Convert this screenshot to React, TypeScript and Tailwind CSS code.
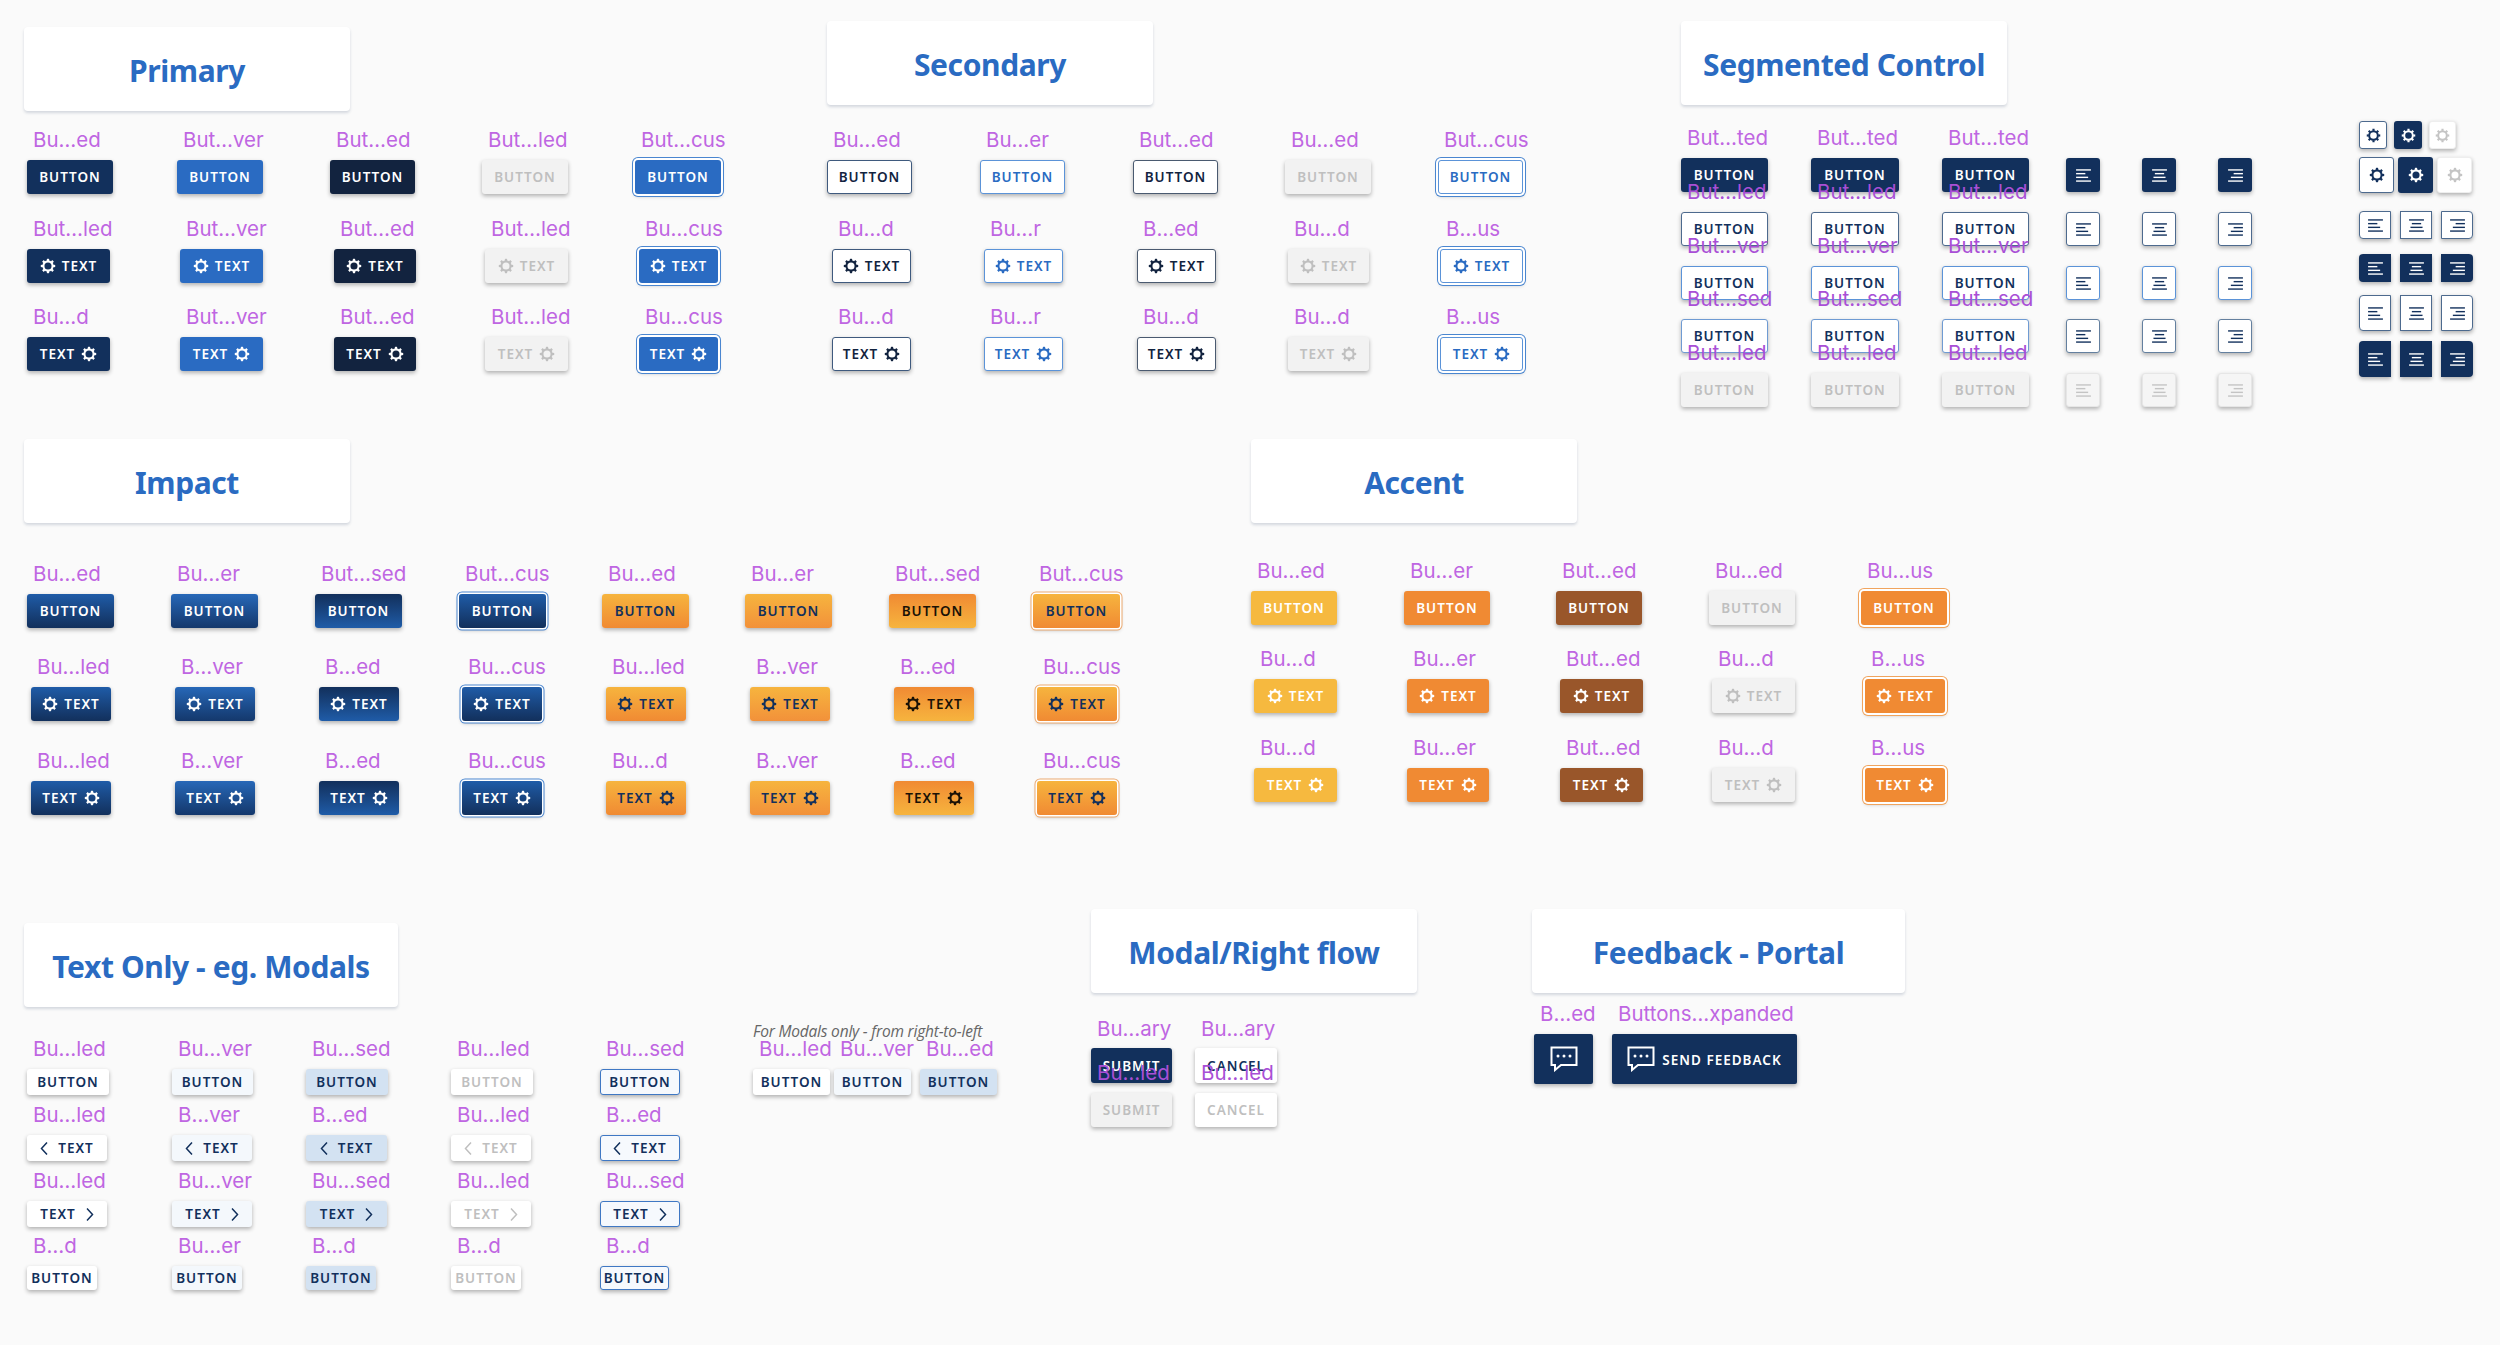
const drop = 'shadow-[0_2px_4px_rgba(0,0,0,0.3)]'

const tones: Record<string, string> = {
  navy: `bg-[#12305c] text-white ${drop}`,
  blue: `bg-[#2a6bc2] text-white ${drop}`,
  dark: `bg-[#12233f] text-white ${drop}`,
  off: `bg-[#f2f2f2] text-[#bfbfbf] ${drop}`,
  blueFocus: 'bg-[#2a6bc2] text-white shadow-[0_0_0_2px_#fff,0_0_0_3px_#4a86d0,0_2px_4px_rgba(0,0,0,0.3)]',
  sec: `bg-white text-[#12233f] border border-[#3f5a7e] ${drop}`,
  secHover: `bg-white text-[#2a6bc2] border border-[#5b93d8] ${drop}`,
  secPress: `bg-white text-[#12233f] border border-[#4a5a70] ${drop}`,
  secFocus: 'bg-white text-[#2a6bc2] border border-[#5b93d8] shadow-[0_0_0_2px_#fff,0_0_0_3px_#4a86d0,0_2px_4px_rgba(0,0,0,0.3)]',
  imp: `bg-gradient-to-b from-[#1f5ca8] to-[#12305c] text-white ${drop}`,
  impHover: `bg-gradient-to-b from-[#2768b8] to-[#14386c] text-white ${drop}`,
  impPress: `bg-gradient-to-b from-[#12305c] to-[#1f5ca8] text-white ${drop}`,
  impFocus: 'bg-gradient-to-b from-[#1f5ca8] to-[#12305c] text-white shadow-[0_0_0_1.5px_#fff,0_0_0_2.5px_#4a86d0,0_2px_4px_rgba(0,0,0,0.3)]',
  org: `bg-gradient-to-b from-[#f6b43e] to-[#f08a33] text-[#12305c] ${drop}`,
  orgHover: `bg-gradient-to-b from-[#f6b43e] to-[#f2913a] text-[#12305c] ${drop}`,
  orgPress: `bg-gradient-to-b from-[#f08a33] to-[#f6b43e] text-[#1a1206] ${drop}`,
  orgFocus: 'bg-gradient-to-b from-[#f6b43e] to-[#f08a33] text-[#12305c] shadow-[0_0_0_1.5px_#fff,0_0_0_2.5px_#ecaa70,0_2px_4px_rgba(0,0,0,0.3)]',
  yellow: `bg-[#f6b93f] text-white ${drop}`,
  orange: `bg-[#f08a33] text-white ${drop}`,
  brown: `bg-[#99562a] text-white ${drop}`,
  orangeFocus: 'bg-[#f08a33] text-white shadow-[0_0_0_2px_#fff,0_0_0_3px_#f0a45e,0_2px_4px_rgba(0,0,0,0.3)]',
  txt: `bg-white text-[#12305c] ${drop}`,
  txtHover: `bg-[#f4f8fc] text-[#12305c] ${drop}`,
  txtPress: `bg-[#d3e2f2] text-[#12305c] ${drop}`,
  txtOff: `bg-white text-[#bfbfbf] ${drop}`,
  txtFocus: `bg-[#f6f9fd] text-[#12305c] border border-[#3f78c4] ${drop}`,
  segSec: `bg-white text-[#12305c] border border-[#4d6a8e] ${drop}`,
  segHover: `bg-white text-[#12305c] border border-[#5b93d8] ${drop}`,
  segFocus: `bg-white text-[#12305c] border border-[#6f9bd3] ${drop}`,
  segPress: `bg-white text-[#12305c] border border-[#64809f] ${drop}`,
  segOff: `bg-[#f2f2f2] text-[#bfbfbf] ${drop}`,
  iconOff: `bg-[#f5f5f5] text-[#c4c4c4] border border-[#e6e6e6] ${drop}`,
  gearOff: `bg-white text-[#c4c4c4] border border-[#eeeeee] ${drop}`,
}

function Gear({ className = 'w-[16px] h-[16px]' }: { className?: string }) {
  const teeth = [0, 45, 90, 135, 180, 225, 270, 315]
  return (
    <svg viewBox="0 0 16 16" className={`${className} shrink-0`} fill="none" stroke="currentColor">
      <circle cx="8" cy="8" r="4.6" strokeWidth="2.1" />
      {teeth.map(t => (
        <line key={t} x1="8" y1="0.8" x2="8" y2="3" strokeWidth="2.3" transform={`rotate(${t} 8 8)`} />
      ))}
    </svg>
  )
}

function Chevron({ dir }: { dir: 'left' | 'right' }) {
  return (
    <svg viewBox="0 0 8 14" className="w-[8px] h-[15px] shrink-0" fill="none" stroke="currentColor" strokeWidth="1.5">
      <path d={dir === 'left' ? 'M7 1 L1.5 7 L7 13' : 'M1 1 L6.5 7 L1 13'} />
    </svg>
  )
}

function AlignIcon({ dir }: { dir: 'l' | 'c' | 'r' }) {
  const rows = [16, 10, 13, 16]
  return (
    <svg viewBox="0 0 16 14" className="w-[15px] h-[13px]" stroke="currentColor" strokeWidth="1.5">
      {rows.map((w, i) => {
        const x = dir === 'l' ? 0 : dir === 'c' ? (16 - w) / 2 : 16 - w
        return <line key={i} x1={x} x2={x + w} y1={1 + i * 4} y2={1 + i * 4} />
      })}
    </svg>
  )
}

function Feedback({ className }: { className: string }) {
  return (
    <svg viewBox="0 0 28 26" className={className} fill="none" stroke="currentColor" strokeWidth="2">
      <path d="M1.5 1.5 H26.5 V19 H11 L5 24 V19 H1.5 Z" />
      <circle cx="8" cy="10" r="1.5" fill="currentColor" stroke="none" />
      <circle cx="14" cy="10" r="1.5" fill="currentColor" stroke="none" />
      <circle cx="20" cy="10" r="1.5" fill="currentColor" stroke="none" />
    </svg>
  )
}

function Content({ kind }: { kind: string }) {
  if (kind === 'gl') return <><Gear /><span className="mt-[2px]">TEXT</span></>
  if (kind === 'gr') return <><span className="mt-[2px]">TEXT</span><Gear /></>
  if (kind === 'cl') return <><Chevron dir="left" /><span className="ml-[4px] mt-[2px]">TEXT</span></>
  if (kind === 'cr') return <><span className="mr-[4px] mt-[2px]">TEXT</span><Chevron dir="right" /></>
  if (kind === 'al') return <AlignIcon dir="l" />
  if (kind === 'ac') return <AlignIcon dir="c" />
  if (kind === 'ar') return <AlignIcon dir="r" />
  return <span className="mt-[2px]">{kind}</span>
}

function Btn({ tone, size, kind, round = 'rounded-[3px]' }: { tone: string; size: string; kind: string; round?: string }) {
  return (
    <div className={`${tones[tone]} ${size} ${round} flex items-center justify-center gap-[6px] text-[13.5px] leading-none font-semibold tracking-[1px]`}>
      <Content kind={kind} />
    </div>
  )
}

function Label({ children, over = false }: { children: string; over?: boolean }) {
  return (
    <div className={`relative h-[26px] pl-[6px] font-['Inter',sans-serif] text-[20.5px] leading-[26px] font-normal whitespace-nowrap ${over ? 'text-[#a94fd6]' : 'text-[#bf66e2]'}`}>
      {children}
    </div>
  )
}

interface RowProps {
  cols: string
  labels: string[]
  tones: string[]
  widths: string[]
  kind: string | string[]
  h?: string
  over?: boolean
  className?: string
}

function BtnRow({ cols, labels, tones: rowTones, widths, kind, h = 'h-[34px]', over = false, className = '' }: RowProps) {
  return (
    <div className={`grid ${cols} items-end ${className}`}>
      {rowTones.map((tone, i) => (
        <div key={i}>
          {labels[i] && <div className="mb-[7px]"><Label over={over}>{labels[i]}</Label></div>}
          <Btn tone={tone} size={`${widths[i]} ${h}`} kind={Array.isArray(kind) ? kind[i] : kind} />
        </div>
      ))}
    </div>
  )
}

function Card({ title, className = 'w-[326px]' }: { title: string; className?: string }) {
  return (
    <div className={`${className} h-[84px] pt-[2px] bg-white rounded-[4px] shadow-[0_2px_3px_rgba(40,60,100,0.18)] flex items-center justify-center text-[30px] font-bold tracking-[-0.4px] text-[#2a6bc2]`}>
      {title}
    </div>
  )
}

const primaryTones = ['navy', 'blue', 'dark', 'off', 'blueFocus']
const secondaryTones = ['sec', 'secHover', 'secPress', 'off', 'secFocus']
const impactTones = ['imp', 'impHover', 'impPress', 'impFocus', 'org', 'orgHover', 'orgPress', 'orgFocus']
const accentTones = ['yellow', 'orange', 'brown', 'off', 'orangeFocus']
const textTones = ['txt', 'txtHover', 'txtPress', 'txtOff', 'txtFocus']

function Primary() {
  const widths = ['w-[83px]', 'w-[83px]', 'w-[82px]', 'w-[83px]', 'w-[79px]']
  const cols = 'grid-cols-[153px_154px_151px_154px_90px]'
  return (
    <div className="w-[803px] shrink-0 mt-[27px]">
      <Card title="Primary" />
      <div className="pl-[3px] mt-[16px] flex flex-col gap-[22px]">
        <BtnRow cols="grid-cols-[150px_153px_152px_153px_90px]" tones={primaryTones} kind="BUTTON"
          labels={['Bu…ed', 'But…ver', 'But…ed', 'But…led', 'But…cus']}
          widths={['w-[86px]', 'w-[86px]', 'w-[85px]', 'w-[86px]', 'w-[86px]']} />
        <BtnRow cols={cols} tones={primaryTones} kind="gl" widths={widths}
          labels={['But…led', 'But…ver', 'But…ed', 'But…led', 'Bu…cus']} />
        <BtnRow cols={cols} tones={primaryTones} kind="gr" widths={widths} className="-mt-[1px]"
          labels={['Bu…d', 'But…ver', 'But…ed', 'But…led', 'Bu…cus']} />
      </div>
    </div>
  )
}

function Secondary() {
  const widths = ['w-[79px]', 'w-[79px]', 'w-[79px]', 'w-[81px]', 'w-[83px]']
  const cols = 'pl-[5px] grid-cols-[152px_153px_151px_152px_90px]'
  return (
    <div className="w-[854px] shrink-0 mt-[21px]">
      <Card title="Secondary" />
      <div className="mt-[22px] flex flex-col gap-[22px]">
        <BtnRow cols="grid-cols-[153px_153px_152px_153px_90px]" tones={secondaryTones} kind="BUTTON"
          labels={['Bu…ed', 'Bu…er', 'But…ed', 'Bu…ed', 'But…cus']}
          widths={['w-[85px]', 'w-[85px]', 'w-[85px]', 'w-[86px]', 'w-[85px]']} />
        <BtnRow cols={cols} tones={secondaryTones} kind="gl" widths={widths}
          labels={['Bu…d', 'Bu…r', 'B…ed', 'Bu…d', 'B…us']} />
        <BtnRow cols={cols} tones={secondaryTones} kind="gr" widths={widths} className="-mt-[1px]"
          labels={['Bu…d', 'Bu…r', 'Bu…d', 'Bu…d', 'B…us']} />
      </div>
    </div>
  )
}

function Segmented() {
  const cols = 'grid-cols-[130px_131px_124px_76px_76px_34px]'
  const widths = ['w-[87px]', 'w-[88px]', 'w-[87px]', 'w-[34px]', 'w-[34px]', 'w-[34px]']
  const kind = ['BUTTON', 'BUTTON', 'BUTTON', 'al', 'ac', 'ar']
  const rows = [
    { label: 'But…ted', text: 'navy', icon: 'navy' },
    { label: 'But…led', text: 'segSec', icon: 'segSec' },
    { label: 'But…ver', text: 'segHover', icon: 'segHover' },
    { label: 'But…sed', text: 'segFocus', icon: 'segPress' },
    { label: 'But…led', text: 'segOff', icon: 'iconOff' },
  ]
  return (
    <div className="w-[678px] shrink-0 mt-[21px]">
      <Card title="Segmented Control" />
      <div className="mt-[20px] flex flex-col">
        {rows.map((r, i) => (
          <BtnRow key={i} cols={cols} widths={widths} kind={kind} over={i > 0}
            className={i === 0 ? '' : i === 3 ? '-mt-[14px]' : '-mt-[13px]'}
            labels={[r.label, r.label, r.label, '', '', '']}
            tones={[r.text, r.text, r.text, r.icon, r.icon, r.icon]} />
        ))}
      </div>
    </div>
  )
}

function AlignGroup({ tone, h, className }: { tone: string; h: string; className: string }) {
  const rounds = ['rounded-l-[4px]', 'rounded-none', 'rounded-r-[4px]']
  const kinds = ['al', 'ac', 'ar']
  return (
    <div className={`flex gap-[9px] ${className}`}>
      {kinds.map((k, i) => (
        <Btn key={k} tone={tone} kind={k} size={`w-[32px] ${h}`} round={rounds[i]} />
      ))}
    </div>
  )
}

function SideCluster() {
  return (
    <div className="shrink-0 mt-[121px] flex flex-col">
      <div className="flex gap-[7px] text-[#12233f]">
        <div className={`${tones.segSec} w-[28px] h-[28px] rounded-[3px] flex items-center justify-center`}><Gear className="w-[15px] h-[15px]" /></div>
        <div className={`${tones.navy} w-[28px] h-[28px] rounded-[3px] flex items-center justify-center`}><Gear className="w-[15px] h-[15px]" /></div>
        <div className={`${tones.gearOff} w-[27px] h-[28px] rounded-[3px] flex items-center justify-center`}><Gear className="w-[15px] h-[15px]" /></div>
      </div>
      <div className="flex gap-[4px] mt-[8px]">
        <div className={`${tones.segSec} w-[35px] h-[36px] rounded-[3px] flex items-center justify-center`}><Gear /></div>
        <div className={`${tones.navy} w-[35px] h-[36px] rounded-[3px] flex items-center justify-center`}><Gear /></div>
        <div className={`${tones.gearOff} w-[35px] h-[36px] rounded-[3px] flex items-center justify-center`}><Gear /></div>
      </div>
      <AlignGroup tone="segSec" h="h-[28px]" className="mt-[18px]" />
      <AlignGroup tone="navy" h="h-[28px]" className="mt-[15px]" />
      <AlignGroup tone="segSec" h="h-[36px]" className="mt-[13px]" />
      <AlignGroup tone="navy" h="h-[36px]" className="mt-[10px]" />
    </div>
  )
}

function Impact() {
  const cols = 'pl-[7px] grid-cols-[144px_144px_143px_144px_144px_144px_143px_90px]'
  const widths = Array(8).fill('w-[80px]')
  return (
    <div className="w-[1227px] shrink-0">
      <Card title="Impact" />
      <div className="mt-[38px] flex flex-col gap-[26px]">
        <BtnRow cols="pl-[3px] grid-cols-[144px_144px_144px_143px_143px_144px_144px_90px]" tones={impactTones} kind="BUTTON"
          labels={['Bu…ed', 'Bu…er', 'But…sed', 'But…cus', 'Bu…ed', 'Bu…er', 'But…sed', 'But…cus']}
          widths={Array(8).fill('w-[87px]')} />
        <BtnRow cols={cols} tones={impactTones} kind="gl" widths={widths}
          labels={['Bu…led', 'B…ver', 'B…ed', 'Bu…cus', 'Bu…led', 'B…ver', 'B…ed', 'Bu…cus']} />
        <BtnRow cols={cols} tones={impactTones} kind="gr" widths={widths} className="mt-[1px]"
          labels={['Bu…led', 'B…ver', 'B…ed', 'Bu…cus', 'Bu…d', 'B…ver', 'B…ed', 'Bu…cus']} />
      </div>
    </div>
  )
}

function Accent() {
  const cols = 'pl-[3px] grid-cols-[153px_153px_152px_153px_90px]'
  const widths = ['w-[83px]', 'w-[82px]', 'w-[83px]', 'w-[83px]', 'w-[80px]']
  return (
    <div className="w-[400px] shrink-0">
      <Card title="Accent" />
      <div className="mt-[35px] flex flex-col gap-[21px]">
        <BtnRow cols="grid-cols-[153px_152px_153px_152px_90px]" tones={accentTones} kind="BUTTON"
          labels={['Bu…ed', 'Bu…er', 'But…ed', 'Bu…ed', 'Bu…us']}
          widths={Array(5).fill('w-[86px]')} />
        <BtnRow cols={cols} tones={accentTones} kind="gl" widths={widths}
          labels={['Bu…d', 'Bu…er', 'But…ed', 'Bu…d', 'B…us']} />
        <BtnRow cols={cols} tones={accentTones} kind="gr" widths={widths} className="mt-[1px]"
          labels={['Bu…d', 'Bu…er', 'But…ed', 'Bu…d', 'B…us']} />
      </div>
    </div>
  )
}

function TextOnly() {
  const cols = 'grid-cols-[145px_134px_145px_149px_90px]'
  const w2 = ['w-[80px]', 'w-[80px]', 'w-[81px]', 'w-[80px]', 'w-[80px]']
  return (
    <div className="w-[729px] shrink-0 mt-[14px]">
      <Card title="Text Only - eg. Modals" className="w-[374px]" />
      <div className="pl-[3px] mt-[29px] flex flex-col gap-[7px]">
        <BtnRow cols={cols} tones={textTones} kind="BUTTON" h="h-[26px]"
          labels={['Bu…led', 'Bu…ver', 'Bu…sed', 'Bu…led', 'Bu…sed']}
          widths={['w-[82px]', 'w-[81px]', 'w-[82px]', 'w-[82px]', 'w-[80px]']} />
        <BtnRow cols={cols} tones={textTones} kind="cl" h="h-[26px]" widths={w2}
          labels={['Bu…led', 'B…ver', 'B…ed', 'Bu…led', 'B…ed']} />
        <BtnRow cols={cols} tones={textTones} kind="cr" h="h-[26px]" widths={w2}
          labels={['Bu…led', 'Bu…ver', 'Bu…sed', 'Bu…led', 'Bu…sed']} />
        <BtnRow cols={cols} tones={textTones} kind="BUTTON" h="h-[24px]" className="-mt-[1px]"
          labels={['B…d', 'Bu…er', 'B…d', 'B…d', 'B…d']}
          widths={['w-[70px]', 'w-[70px]', 'w-[70px]', 'w-[70px]', 'w-[69px]']} />
      </div>
    </div>
  )
}

function ModalsOnly() {
  return (
    <div className="w-[338px] shrink-0 mt-[113px]">
      <div className="h-[18px] leading-[18px] text-[15.5px] italic text-[#666666] font-['Open_Sans',sans-serif] tracking-[-0.2px] whitespace-nowrap">
        For Modals only - from right-to-left
      </div>
      <BtnRow cols="-mt-[4px] grid-cols-[81px_86px_77px]" tones={['txt', 'txtHover', 'txtPress']} kind="BUTTON" h="h-[26px]"
        labels={['Bu…led', 'Bu…ver', 'Bu…ed']}
        widths={['w-[77px]', 'w-[77px]', 'w-[77px]']} />
    </div>
  )
}

function ModalFlow() {
  const cols = 'grid-cols-[104px_82px]'
  return (
    <div className="w-[441px] shrink-0">
      <Card title="Modal/Right flow" />
      <div className="mt-[23px]">
        <div className={`grid ${cols}`}>
          <Label>Bu…ary</Label>
          <Label>Bu…ary</Label>
        </div>
        <div className={`grid ${cols} mt-[6px]`}>
          <Btn tone="navy" size="w-[81px] h-[35px]" kind="SUBMIT" />
          <Btn tone="txt" size="w-[82px] h-[35px]" kind="CANCEL" />
        </div>
        <div className={`grid ${cols} -mt-[23px]`}>
          <Label over>Bu…led</Label>
          <Label over>Bu…led</Label>
        </div>
        <div className={`grid ${cols} mt-[7px]`}>
          <Btn tone="off" size="w-[81px] h-[34px]" kind="SUBMIT" />
          <Btn tone="txtOff" size="w-[82px] h-[34px]" kind="CANCEL" />
        </div>
      </div>
    </div>
  )
}

function FeedbackPortal() {
  return (
    <div className="w-[373px] shrink-0">
      <Card title="Feedback - Portal" className="w-[373px]" />
      <div className="pl-[2px] mt-[8px] flex gap-[19px]">
        <div className="w-[59px]">
          <div className="mb-[7px]"><Label>B…ed</Label></div>
          <div className={`${tones.navy} w-[59px] h-[50px] rounded-[2px] flex items-center justify-center`}>
            <Feedback className="w-[28px] h-[26px]" />
          </div>
        </div>
        <div>
          <div className="mb-[7px]"><Label>Buttons…xpanded</Label></div>
          <div className={`${tones.navy} w-[185px] h-[50px] rounded-[2px] flex items-center justify-center gap-[7px] text-[13.5px] font-semibold tracking-[1px]`}>
            <Feedback className="w-[28px] h-[26px]" />
            <span className="mt-[2px]">SEND FEEDBACK</span>
          </div>
        </div>
      </div>
    </div>
  )
}

export default function App() {
  return (
    <div className="w-[2500px] h-[1345px] overflow-hidden bg-[#fafafa] font-['Noto_Sans',sans-serif]">
      <div className="h-[439px] pl-[24px] flex items-start">
        <Primary />
        <Secondary />
        <Segmented />
        <SideCluster />
      </div>
      <div className="h-[470px] pl-[24px] flex items-start">
        <Impact />
        <Accent />
      </div>
      <div className="pl-[24px] flex items-start">
        <TextOnly />
        <ModalsOnly />
        <ModalFlow />
        <FeedbackPortal />
      </div>
    </div>
  )
}
